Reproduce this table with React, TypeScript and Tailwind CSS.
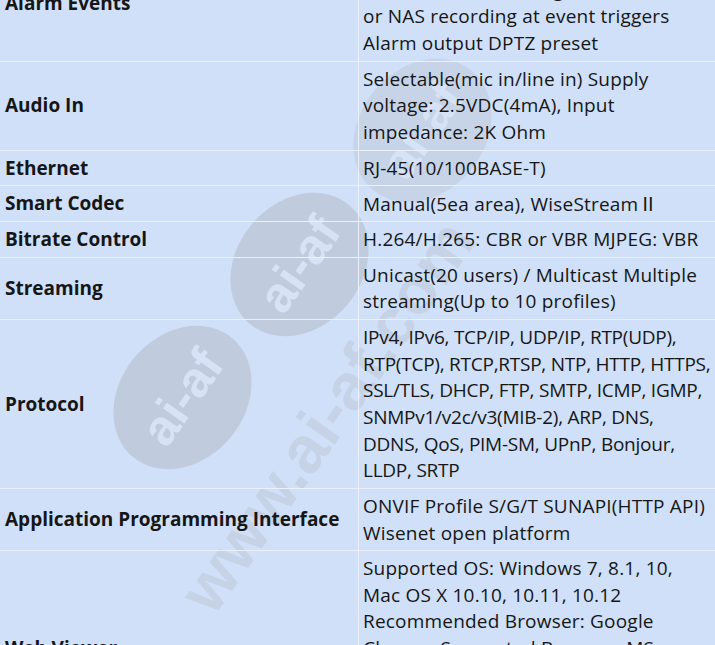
import React from "react";

type Row = { label: string; lines: React.ReactNode[]; tight?: boolean };

const rows: Row[] = [
  {
    label: "Alarm Events",
    lines: [
      "File upload via FTP and e-mail Notification",
      "via e-mail Local storage(SD/SDHC/SDXC)",
      "or NAS recording at event triggers",
      "Alarm output DPTZ preset",
    ],
  },
  {
    label: "Audio In",
    lines: [
      "Selectable(mic in/line in) Supply",
      "voltage: 2.5VDC(4mA), Input",
      "impedance: 2K Ohm",
    ],
  },
  { label: "Ethernet", lines: ["RJ-45(10/100BASE-T)"] },
  {
    label: "Smart Codec",
    lines: [
      <>
        Manual(5ea area), WiseStream
        <span className="[font-family:'Noto_Sans_CJK_SC',sans-serif]">Ⅱ</span>
      </>,
    ],
  },
  { label: "Bitrate Control", lines: ["H.264/H.265: CBR or VBR MJPEG: VBR"] },
  {
    label: "Streaming",
    lines: ["Unicast(20 users) / Multicast Multiple", "streaming(Up to 10 profiles)"],
  },
  {
    label: "Protocol",
    tight: true,
    lines: [
      "IPv4, IPv6, TCP/IP, UDP/IP, RTP(UDP),",
      "RTP(TCP), RTCP,RTSP, NTP, HTTP, HTTPS,",
      "SSL/TLS, DHCP, FTP, SMTP, ICMP, IGMP,",
      "SNMPv1/v2c/v3(MIB-2), ARP, DNS,",
      "DDNS, QoS, PIM-SM, UPnP, Bonjour,",
      "LLDP, SRTP",
    ],
  },
  {
    label: "Application Programming Interface",
    lines: ["ONVIF Profile S/G/T SUNAPI(HTTP API)", "Wisenet open platform"],
  },
  {
    label: "Web Viewer",
    lines: [
      "Supported OS: Windows 7, 8.1, 10,",
      "Mac OS X 10.10, 10.11, 10.12",
      "Recommended Browser: Google",
      "Chrome Supported Browser: MS",
      "Explorer11, MS Edge, Mozilla",
      "Firefox, Apple Safari(Mac only)",
      "",
    ],
  },
];

function Blob({ cls, tone }: { cls: string; tone: string }) {
  return (
    <div
      className={`absolute flex h-[125px] w-[155px] -rotate-[50deg] items-center justify-center rounded-[50%] ${tone} ${cls}`}
    >
      <span className="-rotate-[5deg] text-[50px] font-bold text-[#d6e3f6] [font-family:'Liberation_Sans',Arial,sans-serif]">
        ai-af
      </span>
    </div>
  );
}

export default function App() {
  return (
    <div className="relative h-[645px] w-[715px] overflow-hidden bg-[#cfe0f8] text-[#161616] [font-family:'Open_Sans','Noto_Sans','Noto_Sans_CJK_SC',sans-serif]">
      <div className="pointer-events-none absolute inset-0">
        <Blob cls="left-[105px] top-[335px]" tone="bg-[#c0ccde]" />
        <Blob cls="left-[222px] top-[202px]" tone="bg-[#c0ccde]" />
        <Blob cls="left-[345px] top-[68px]" tone="bg-[#c7d4e8]" />
        <span className="absolute left-[195px] top-[555px] origin-left -rotate-[55deg] whitespace-nowrap text-[66px] font-bold text-[#c6d3e6] [font-family:'Liberation_Sans',Arial,sans-serif]">
          www.ai-af.com
        </span>
      </div>
      <div className="relative -mt-[54px]">
        {rows.map((r) => (
          <div key={r.label} className="flex border-b border-[#eaf1fc]">
            <div className="flex w-[359px] shrink-0 items-center border-r border-[#eaf1fc] py-1 pl-[5px] text-[19px] font-bold leading-[26.67px]">
              {r.label}
            </div>
            <div
              className={`flex-1 py-1 pl-1 text-[19px] leading-[26.67px] ${
                r.tight ? "tracking-[-0.25px]" : "tracking-[0.2px]"
              }`}
            >
              {r.lines.map((l, i) => (
                <div key={i} className="h-[26.67px] whitespace-nowrap">
                  {l}
                </div>
              ))}
            </div>
          </div>
        ))}
      </div>
    </div>
  );
}
